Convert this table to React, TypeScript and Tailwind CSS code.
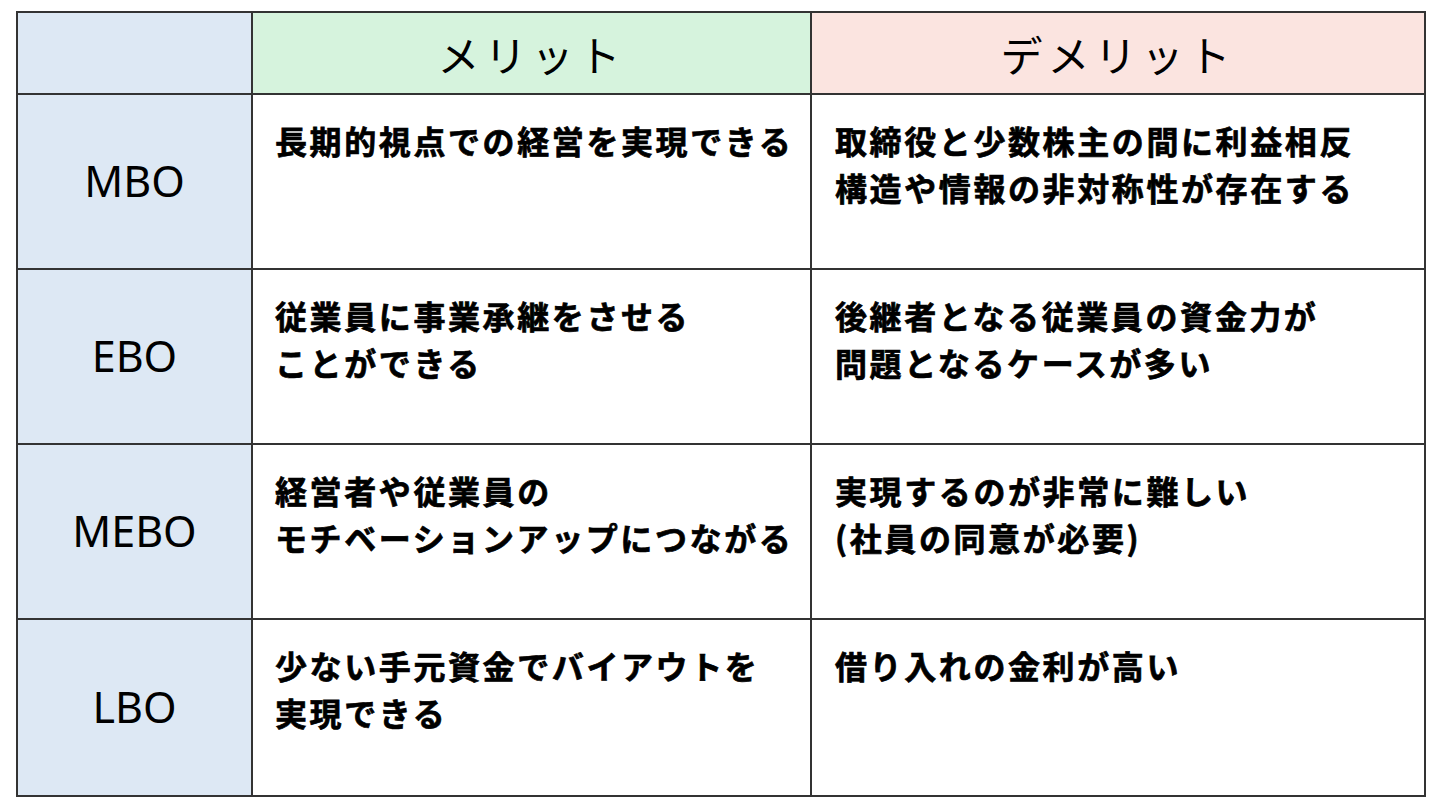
const rows = [
  {
    label: "MBO",
    merit: ["長期的視点での経営を実現できる"],
    demerit: ["取締役と少数株主の間に利益相反", "構造や情報の非対称性が存在する"],
  },
  {
    label: "EBO",
    merit: ["従業員に事業承継をさせる", "ことができる"],
    demerit: ["後継者となる従業員の資金力が", "問題となるケースが多い"],
  },
  {
    label: "MEBO",
    merit: ["経営者や従業員の", "モチベーションアップにつながる"],
    demerit: ["実現するのが非常に難しい", "(社員の同意が必要)"],
  },
  {
    label: "LBO",
    merit: ["少ない手元資金でバイアウトを", "実現できる"],
    demerit: ["借り入れの金利が高い"],
  },
];

const font = { fontFamily: '"Noto Sans CJK JP", "Noto Sans", sans-serif' };

export default function App() {
  return (
    <div className="w-[1440px] h-[810px] bg-white pl-[16px] pt-[11px]" style={font}>
      <table className="border-collapse table-fixed w-[1408px]">
        <colgroup>
          <col className="w-[235px]" />
          <col className="w-[559px]" />
          <col className="w-[614px]" />
        </colgroup>
        <thead>
          <tr className="h-[82px]">
            <th className="border-2 border-[#333333] bg-[#dde8f4]" />
            <th className="border-2 border-[#333333] bg-[#d6f3dd] text-[42px] font-normal text-black tracking-[5px]">
              メリット
            </th>
            <th className="border-2 border-[#333333] bg-[#fbe4e0] text-[42px] font-normal text-black tracking-[5px]">
              デメリット
            </th>
          </tr>
        </thead>
        <tbody>
          {rows.map((r, i) => (
            <tr key={r.label} className={i === 3 ? "h-[177px]" : "h-[175px]"}>
              <td
                className="border-2 border-[#333333] bg-[#dde8f4] text-center align-middle text-[43px] text-black"
                style={{ fontFamily: '"Noto Sans", "Liberation Sans", sans-serif' }}
              >
                {r.label}
              </td>
              <td className="border-2 border-[#333333] align-top pl-[22px] pt-[22px] text-[32px] font-bold leading-[47px] tracking-[2.6px] text-black [-webkit-text-stroke:0.7px_#000]">
                {r.merit.map((l) => (
                  <div key={l} className="whitespace-nowrap">{l}</div>
                ))}
              </td>
              <td className="border-2 border-[#333333] align-top pl-[23px] pt-[22px] text-[32px] font-bold leading-[47px] tracking-[2.6px] text-black [-webkit-text-stroke:0.7px_#000]">
                {r.demerit.map((l) => (
                  <div key={l} className="whitespace-nowrap">{l}</div>
                ))}
              </td>
            </tr>
          ))}
        </tbody>
      </table>
    </div>
  );
}
